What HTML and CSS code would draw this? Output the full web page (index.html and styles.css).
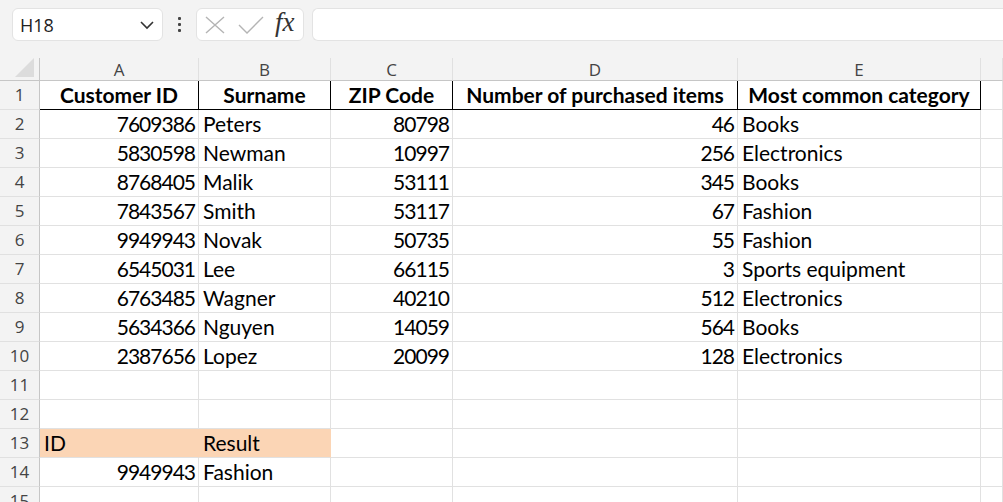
FILE: index.html
```html
<!DOCTYPE html>
<html>
<head>
<meta charset="utf-8">
<link rel="stylesheet" href="styles.css">
</head>
<body>
<div class="app">
  <div class="toolbar">
    <div class="namebox">
      <span class="namebox-text">H18</span>
      <svg class="chevron" width="16" height="10" viewBox="0 0 16 10"><path d="M2 2 L8 8 L14 2" fill="none" stroke="#333" stroke-width="1.6"/></svg>
    </div>
    <div class="grip"><span></span><span></span><span></span></div>
    <div class="fxbox">
      <svg class="icon-x" width="20" height="18" viewBox="0 0 20 18"><path d="M1 1 L19 17 M19 1 L1 17" fill="none" stroke="#b4b4b4" stroke-width="1.4"/></svg>
      <svg class="icon-check" width="26" height="18" viewBox="0 0 26 18"><path d="M1 9 L9 17 L25 1" fill="none" stroke="#b4b4b4" stroke-width="1.4"/></svg>
      <span class="fx">fx</span>
    </div>
    <div class="formula"></div>
  </div>

  <div class="sheet">
    <div class="corner"><div class="tri"></div></div>
    <div class="colh">A</div><div class="colh">B</div><div class="colh">C</div><div class="colh">D</div><div class="colh">E</div><div class="colh last"></div>

    <div class="rowh">1</div>
    <div class="c hd">Customer ID</div><div class="c hd">Surname</div><div class="c hd">ZIP Code</div><div class="c hd">Number of purchased items</div><div class="c hd">Most common category</div><div class="c"></div>

    <div class="rowh">2</div>
    <div class="c n">7609386</div><div class="c">Peters</div><div class="c n">80798</div><div class="c n">46</div><div class="c">Books</div><div class="c"></div>

    <div class="rowh">3</div>
    <div class="c n">5830598</div><div class="c">Newman</div><div class="c n">10997</div><div class="c n">256</div><div class="c">Electronics</div><div class="c"></div>

    <div class="rowh">4</div>
    <div class="c n">8768405</div><div class="c">Malik</div><div class="c n">53111</div><div class="c n">345</div><div class="c">Books</div><div class="c"></div>

    <div class="rowh">5</div>
    <div class="c n">7843567</div><div class="c">Smith</div><div class="c n">53117</div><div class="c n">67</div><div class="c">Fashion</div><div class="c"></div>

    <div class="rowh">6</div>
    <div class="c n">9949943</div><div class="c">Novak</div><div class="c n">50735</div><div class="c n">55</div><div class="c">Fashion</div><div class="c"></div>

    <div class="rowh">7</div>
    <div class="c n">6545031</div><div class="c">Lee</div><div class="c n">66115</div><div class="c n">3</div><div class="c">Sports equipment</div><div class="c"></div>

    <div class="rowh">8</div>
    <div class="c n">6763485</div><div class="c">Wagner</div><div class="c n">40210</div><div class="c n">512</div><div class="c">Electronics</div><div class="c"></div>

    <div class="rowh">9</div>
    <div class="c n">5634366</div><div class="c">Nguyen</div><div class="c n">14059</div><div class="c n">564</div><div class="c">Books</div><div class="c"></div>

    <div class="rowh">10</div>
    <div class="c n">2387656</div><div class="c">Lopez</div><div class="c n">20099</div><div class="c n">128</div><div class="c">Electronics</div><div class="c"></div>

    <div class="rowh">11</div>
    <div class="c"></div><div class="c"></div><div class="c"></div><div class="c"></div><div class="c"></div><div class="c"></div>

    <div class="rowh">12</div>
    <div class="c"></div><div class="c"></div><div class="c"></div><div class="c"></div><div class="c"></div><div class="c"></div>

    <div class="rowh">13</div>
    <div class="c hl">ID</div><div class="c hl">Result</div><div class="c"></div><div class="c"></div><div class="c"></div><div class="c"></div>

    <div class="rowh">14</div>
    <div class="c n">9949943</div><div class="c">Fashion</div><div class="c"></div><div class="c"></div><div class="c"></div><div class="c"></div>

    <div class="rowh">15</div>
    <div class="c"></div><div class="c"></div><div class="c"></div><div class="c"></div><div class="c"></div><div class="c"></div>
  </div>
</div>
</body>
</html>
```

FILE: styles.css
```css
html, body {
  margin: 0;
  padding: 0;
  background: #f3f3f3;
  overflow: hidden;
}

.app {
  width: 1003px;
  height: 502px;
  overflow: hidden;
  background: #f3f3f3;
}

.toolbar {
  height: 33px;
  padding: 8px 0 17px 12px;
  display: flex;
  align-items: stretch;
}

.namebox {
  width: 151px;
  background: #fff;
  border: 1px solid #e3e3e3;
  border-radius: 6px;
  display: flex;
  align-items: center;
  justify-content: space-between;
  padding: 0 7px 0 7px;
  box-sizing: border-box;
}

.namebox-text {
  font-family: "Open Sans", "Noto Sans", sans-serif;
  font-size: 18px;
  color: #222;
}

.grip {
  width: 33px;
  display: flex;
  flex-direction: column;
  align-items: center;
  justify-content: center;
  gap: 3px;
}

.grip span {
  width: 3px;
  height: 3px;
  background: #444;
  border-radius: 1px;
}

.fxbox {
  width: 108px;
  background: #fff;
  border: 1px solid #e3e3e3;
  border-radius: 6px;
  box-sizing: border-box;
  display: flex;
  align-items: center;
  padding-left: 8px;
}

.icon-x {
  margin-right: 13px;
}

.icon-check {
  margin-right: 11px;
}

.fx {
  font-family: "Liberation Serif", "DejaVu Serif", serif;
  font-style: italic;
  font-size: 27px;
  color: #333;
  line-height: 1;
  margin-top: -5px;
}

.formula {
  flex: 1;
  margin-left: 8px;
  background: #fff;
  border: 1px solid #e3e3e3;
  border-right: none;
  border-radius: 6px 0 0 6px;
}

.sheet {
  display: grid;
  grid-template-columns: 40px 159px 132px 122px 285px 243px 1fr;
  grid-template-rows: 23px;
  grid-auto-rows: 29px;
  font-family: Lato, "Open Sans", sans-serif;
  font-size: 21px;
  color: #000;
}

.corner {
  border-right: 1px solid #c6c6c6;
  border-bottom: 1px solid #c6c6c6;
  position: relative;
}

.tri {
  position: absolute;
  right: 5px;
  bottom: 3px;
  width: 0;
  height: 0;
  border-left: 19px solid transparent;
  border-bottom: 19px solid #dcdcdc;
}

.colh {
  border-right: 1px solid #e0e0e0;
  border-bottom: 1px solid #c6c6c6;
  display: flex;
  align-items: center;
  justify-content: center;
  font-family: "Open Sans", "Noto Sans", sans-serif;
  font-size: 17px;
  color: #444;
}

.rowh {
  border-right: 1px solid #c6c6c6;
  border-bottom: 1px solid #e0e0e0;
  display: flex;
  align-items: flex-end;
  justify-content: center;
  padding-bottom: 2px;
  font-family: "Open Sans", "Noto Sans", sans-serif;
  font-size: 17px;
  color: #444;
  line-height: 24px;
}

.c {
  background: #fff;
  border-right: 1px solid #e1e1e1;
  border-bottom: 1px solid #e1e1e1;
  display: flex;
  align-items: flex-end;
  padding: 0 4px 1px 4px;
  line-height: 26px;
  white-space: nowrap;
  overflow: visible;
}

.c.n {
  justify-content: flex-end;
  letter-spacing: -1px;
  padding-right: 3px;
}

.c.hd {
  font-weight: bold;
  justify-content: center;
  border-right-color: #000;
  border-bottom-color: #000;
}

.c.hd:last-of-type {
  border-right-color: #e1e1e1;
}

.c.hl {
  background: #fbd5b5;
  border-right-color: #fbd5b5;
}
```
